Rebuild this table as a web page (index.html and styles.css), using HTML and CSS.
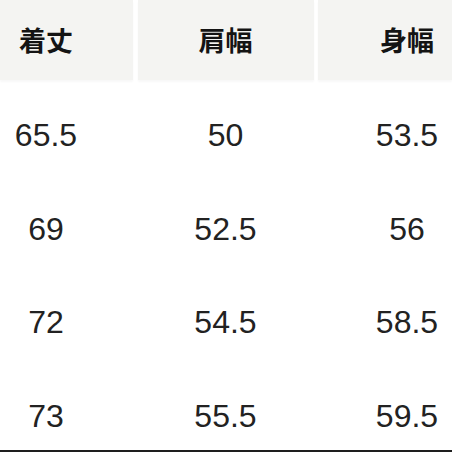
FILE: index.html
```html
<!DOCTYPE html>
<html lang="ja">
<head>
<meta charset="utf-8">
<link rel="stylesheet" href="styles.css">
</head>
<body>
<div class="sheet">
  <div class="row head">
    <div class="cell c1">着丈</div>
    <div class="cell c2">肩幅</div>
    <div class="cell c3">身幅</div>
  </div>
  <div class="body">
    <div class="row data">
      <div class="cell c1">65.5</div>
      <div class="cell c2">50</div>
      <div class="cell c3">53.5</div>
    </div>
    <div class="row data">
      <div class="cell c1">69</div>
      <div class="cell c2">52.5</div>
      <div class="cell c3">56</div>
    </div>
    <div class="row data">
      <div class="cell c1">72</div>
      <div class="cell c2">54.5</div>
      <div class="cell c3">58.5</div>
    </div>
    <div class="row data">
      <div class="cell c1">73</div>
      <div class="cell c2">55.5</div>
      <div class="cell c3">59.5</div>
    </div>
  </div>
</div>
</body>
</html>
```
FILE: styles.css
```css
html, body {
  margin: 0;
  padding: 0;
  background: #ffffff;
}
.sheet {
  width: 452px;
  height: 452px;
  box-sizing: border-box;
  border-bottom: 2px solid #1e1e1e;
  overflow: hidden;
  display: flex;
  flex-direction: column;
}
.row {
  display: grid;
  grid-template-columns: 133px 176px 134px;
  column-gap: 4px;
  column-gap: 4.5px;
}
.cell {
  text-align: center;
  box-sizing: border-box;
}
.c1 { padding-right: 41px; }
.c3 { padding-left: 44px; }
.head {
  height: 80px;
  flex: none;
}
.head .cell {
  background: #f4f4f2;
  font-family: "Noto Sans CJK JP", "Noto Sans", sans-serif;
  font-weight: 700;
  font-size: 27px;
  line-height: 80px;
  color: #141414;
  box-shadow: 0 2px 2px rgba(0,0,0,0.03);
}
.body {
  padding-top: 9px;
  flex: none;
}
.data {
  height: 93.5px;
}
.data .cell {
  font-family: "Liberation Sans", Arial, sans-serif;
  font-size: 32px;
  line-height: 93.5px;
  color: #222222;
}
```
